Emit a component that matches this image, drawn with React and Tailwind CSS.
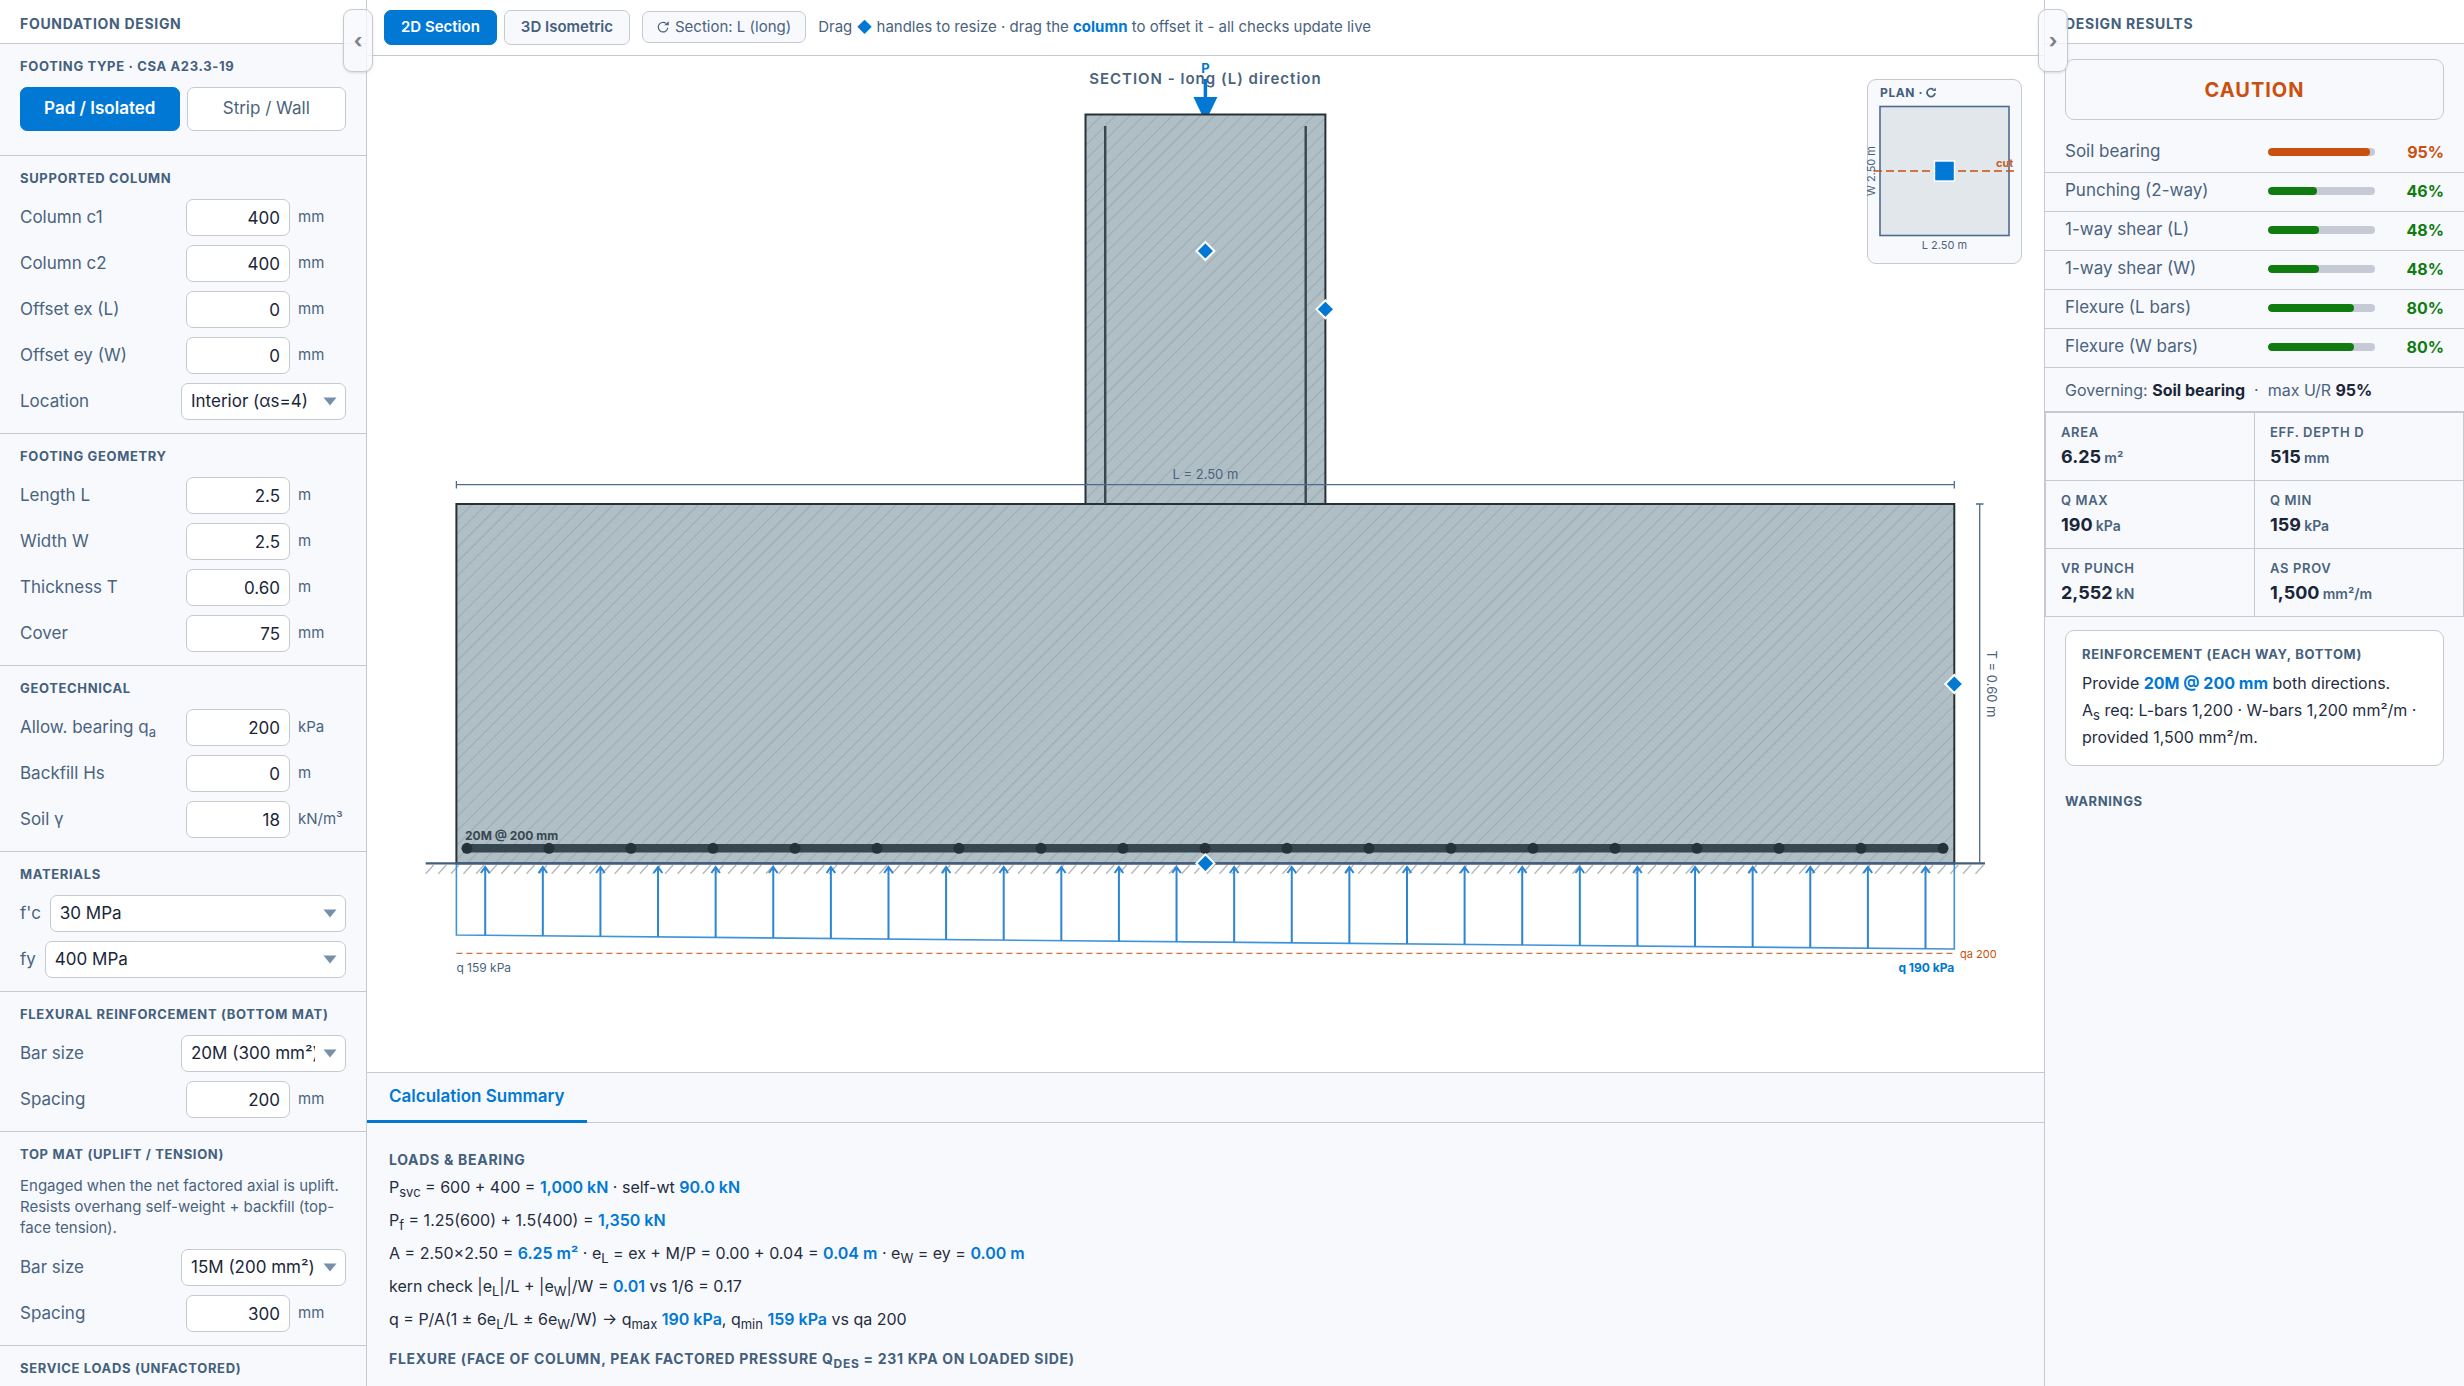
import { useState } from "react";

const checks = [
  { name: "Soil bearing", value: 95 },
  { name: "Punching (2-way)", value: 46 },
  { name: "1-way shear (L)", value: 48 },
  { name: "1-way shear (W)", value: 48 },
  { name: "Flexure (L bars)", value: 80 },
  { name: "Flexure (W bars)", value: 80 },
];

const stats = [
  { label: "AREA", value: "6.25", unit: "m²" },
  { label: "EFF. DEPTH D", value: "515", unit: "mm" },
  { label: "Q MAX", value: "190", unit: "kPa" },
  { label: "Q MIN", value: "159", unit: "kPa" },
  { label: "VR PUNCH", value: "2,552", unit: "kN" },
  { label: "AS PROV", value: "1,500", unit: "mm²/m" },
];

function Section({ title, children }) {
  return (
    <section className="border-b border-[#c6c9cf] px-5 py-[13px]">
      <h3 className="mb-3 text-[13px] leading-[18px] font-bold tracking-wider text-[#43607c]">
        {title}
      </h3>
      <div className="flex flex-col gap-[9px]">{children}</div>
    </section>
  );
}

function NumberRow({ id, label, value, unit }) {
  return (
    <div className="flex h-[37px] items-center">
      <label htmlFor={id} className="flex-1 text-[17px]">
        {label}
      </label>
      <input
        id={id}
        type="text"
        inputMode="decimal"
        defaultValue={value}
        className="h-full w-[104px] rounded-[7px] border border-[#c6c9cf] bg-white px-[9px] text-right text-[17px] text-[#1a2638]"
      />
      <span className="ml-2 w-12 text-[15px] whitespace-nowrap">{unit}</span>
    </div>
  );
}

function SelectRow({ id, label, options, wide }) {
  return (
    <div className="flex h-[37px] items-center gap-[9px]">
      <label htmlFor={id} className={wide ? "text-[17px]" : "flex-1 text-[17px]"}>
        {label}
      </label>
      <div className={wide ? "relative h-full flex-1" : "relative h-full w-[165px]"}>
        <select
          id={id}
          className="h-full w-full appearance-none rounded-[7px] border border-[#c6c9cf] bg-white pr-[30px] pl-[9px] text-[17px] text-[#1a2638]"
        >
          {options.map((o) => (
            <option key={o}>{o}</option>
          ))}
        </select>
        <svg
          viewBox="0 0 14 9"
          className="pointer-events-none absolute top-[14px] right-[9px] h-[9px] w-[14px]"
        >
          <path d="M0.5 0.5H13.5L7 8.5Z" fill="#7590ab" />
        </svg>
      </div>
    </div>
  );
}

function Sub({ children }) {
  return <sub className="-bottom-1 text-[13px]">{children}</sub>;
}

function Val({ children }) {
  return <b className="font-semibold text-[#0078d4]">{children}</b>;
}

// Clockwise circle arrow, 10 x 10 units
function RotateShape() {
  return (
    <>
      <path d="M9 5.6A4 4 0 1 1 7.4 1.9" fill="none" stroke="currentColor" />
      <path d="M6 3.6H9.8V0.2Z" fill="currentColor" />
    </>
  );
}

function Sidebar() {
  const [type, setType] = useState("pad");
  const on = "bg-[#0078d4] font-semibold text-white border-[#0078d4]";
  const off = "bg-white border-[#c6c9cf]";

  return (
    <aside className="w-[367px] shrink-0 overflow-hidden border-r border-[#c6c9cf] bg-[#f8f9fd] text-[#4a637d]">
      <h2 className="flex h-11 items-center border-b border-[#c6c9cf] bg-white px-5 pt-1 text-sm font-bold tracking-wider text-[#43607c]">
        FOUNDATION DESIGN
      </h2>
      <Section title="FOOTING TYPE · CSA A23.3-19">
        <div className="mb-[11px] flex gap-[7px]">
          <button
            onClick={() => setType("pad")}
            className={`h-11 flex-1 rounded-[7px] border text-[17px] ${type === "pad" ? on : off}`}
          >
            Pad / Isolated
          </button>
          <button
            onClick={() => setType("strip")}
            className={`h-11 flex-1 rounded-[7px] border text-[17px] ${type === "strip" ? on : off}`}
          >
            Strip / Wall
          </button>
        </div>
      </Section>
      <Section title="SUPPORTED COLUMN">
        <NumberRow id="c1" label="Column c1" value="400" unit="mm" />
        <NumberRow id="c2" label="Column c2" value="400" unit="mm" />
        <NumberRow id="ex" label="Offset ex (L)" value="0" unit="mm" />
        <NumberRow id="ey" label="Offset ey (W)" value="0" unit="mm" />
        <SelectRow
          id="location"
          label="Location"
          options={["Interior (αs=4)", "Edge (αs=3)", "Corner (αs=2)"]}
        />
      </Section>
      <Section title="FOOTING GEOMETRY">
        <NumberRow id="length" label="Length L" value="2.5" unit="m" />
        <NumberRow id="width" label="Width W" value="2.5" unit="m" />
        <NumberRow id="thickness" label="Thickness T" value="0.60" unit="m" />
        <NumberRow id="cover" label="Cover" value="75" unit="mm" />
      </Section>
      <Section title="GEOTECHNICAL">
        <NumberRow
          id="qa"
          label={
            <>
              Allow. bearing q<Sub>a</Sub>
            </>
          }
          value="200"
          unit="kPa"
        />
        <NumberRow id="hs" label="Backfill Hs" value="0" unit="m" />
        <NumberRow id="gamma" label="Soil γ" value="18" unit="kN/m³" />
      </Section>
      <Section title="MATERIALS">
        <SelectRow id="fc" label="f'c" options={["30 MPa", "35 MPa", "40 MPa"]} wide />
        <SelectRow id="fy" label="fy" options={["400 MPa", "500 MPa"]} wide />
      </Section>
      <Section title="FLEXURAL REINFORCEMENT (BOTTOM MAT)">
        <SelectRow id="bar" label="Bar size" options={["20M (300 mm²)", "25M (500 mm²)"]} />
        <NumberRow id="spacing" label="Spacing" value="200" unit="mm" />
      </Section>
      <Section title="TOP MAT (UPLIFT / TENSION)">
        <p className="mb-[2px] text-[15px] leading-[21px]">
          Engaged when the net factored axial is uplift. Resists overhang
          self-weight + backfill (top-face tension).
        </p>
        <SelectRow id="topbar" label="Bar size" options={["15M (200 mm²)", "20M (300 mm²)"]} />
        <NumberRow id="topspacing" label="Spacing" value="300" unit="mm" />
      </Section>
      <Section title="SERVICE LOADS (UNFACTORED)" />
    </aside>
  );
}

function Handle({ x, y }) {
  return (
    <path
      d={`M${x} ${y - 9}L${x + 9} ${y}L${x} ${y + 9}L${x - 9} ${y}Z`}
      fill="#0078d4"
      stroke="#fff"
      strokeWidth="2"
    />
  );
}

// Footing elevation, drawn at 600 units per metre
const LEFT = 89.4;
const RIGHT = 1587.3;
const TOP = 448;
const BASE = 807.4;
const MID = 838.4;

function SectionDrawing() {
  const step = (RIGHT - LEFT) / 26;
  const arrows = Array.from({ length: 26 }, (_, i) => LEFT + step * (i + 0.5));
  const dots = Array.from({ length: 19 }, (_, i) => 100 + i * 82);
  const ticks = Array.from({ length: 124 }, (_, i) => 58.7 + i * 12.6);
  const pressure = (x) => 879 + ((x - LEFT) / (RIGHT - LEFT)) * 14;

  return (
    <svg viewBox="0 0 1677 1016" className="block h-full w-full">
      <defs>
        <pattern
          id="hatch"
          width="10"
          height="10"
          patternUnits="userSpaceOnUse"
          patternTransform="rotate(45)"
        >
          <rect width="10" height="10" fill="#b0bec5" />
          <line x1="1.5" y1="0" x2="1.5" y2="10" stroke="#9aa9b1" strokeWidth="0.9" />
        </pattern>
      </defs>

      {/* ground line */}
      {ticks.map((x) => (
        <line key={x} x1={x} y1="817.7" x2={x + 8} y2="809" stroke="#b2b5bc" strokeWidth="1.3" />
      ))}

      {/* soil pressure */}
      <path
        d={`M${LEFT} ${BASE}V879L${RIGHT} 893V${BASE}`}
        fill="none"
        stroke="#3f93d8"
        strokeWidth="1.6"
      />
      {arrows.map((x) => (
        <path
          key={x}
          d={`M${x} ${pressure(x)}V811M${x - 4.3} 817L${x} 811L${x + 4.3} 817`}
          fill="none"
          stroke="#2b86d3"
          strokeWidth="2"
        />
      ))}
      <line x1={LEFT} y1="897.3" x2={RIGHT} y2="897.3" stroke="#d0713f" strokeWidth="1.3" strokeDasharray="6 4" />
      <text x={LEFT} y="916" fontSize="12" fill="#4a637d">q 159 kPa</text>
      <text x={RIGHT} y="916" fontSize="12" fontWeight="700" fill="#0078d4" textAnchor="end">q 190 kPa</text>
      <text x="1593" y="902" fontSize="11" fill="#ca5010">qa 200</text>

      {/* axial load */}
      <text x={MID} y="28" fontSize="15" fontWeight="600" letterSpacing="1" fill="#4a637d" textAnchor="middle">
        SECTION - long (L) direction
      </text>
      <text x={MID} y="17" fontSize="13" fontWeight="700" fill="#0078d4" textAnchor="middle">P</text>
      <line x1={MID} y1="23" x2={MID} y2="43" stroke="#0078d4" strokeWidth="3.5" />
      <path d={`M${MID - 12} 41H${MID + 12}L${MID} 66Z`} fill="#0078d4" />

      {/* concrete */}
      <rect x="718.5" y="58.5" width="239.9" height="389.5" fill="url(#hatch)" stroke="#263238" strokeWidth="2" />
      <rect x={LEFT} y={TOP} width={RIGHT - LEFT} height={BASE - TOP} fill="url(#hatch)" stroke="#263238" strokeWidth="2" />
      <line x1="58.7" y1={BASE} x2="1618" y2={BASE} stroke="#435d80" strokeWidth="2.4" />

      {/* rebar */}
      <path d={`M738.2 70V${TOP}M938.7 70V${TOP}`} stroke="#37474f" strokeWidth="2.4" />
      <line x1="100" y1="792.3" x2="1576.3" y2="792.3" stroke="#37474f" strokeWidth="8.5" strokeLinecap="round" />
      {dots.map((x) => (
        <circle key={x} cx={x} cy="792.3" r="5.5" fill="#263238" />
      ))}
      <text x="98" y="784" fontSize="12" fontWeight="700" fill="#37474f">20M @ 200 mm</text>

      {/* dimensions */}
      <path
        d={`M${LEFT} 428.7H${RIGHT}M${LEFT} 425V432.5M${RIGHT} 425V432.5M1612.7 ${TOP}V${BASE}M1609 ${TOP}H1616.5`}
        stroke="#4f6b8a"
        strokeWidth="1.3"
      />
      <text x={MID} y="423" fontSize="13" fill="#4a637d" textAnchor="middle">L = 2.50 m</text>
      <text x="0" y="0" fontSize="13" fill="#4a637d" textAnchor="middle" transform="translate(1620 628) rotate(90)">
        T = 0.60 m
      </text>

      <Handle x={MID} y={195} />
      <Handle x={958.4} y={253.3} />
      <Handle x={RIGHT} y={628} />
      <Handle x={MID} y={BASE} />
    </svg>
  );
}

function PlanInset() {
  return (
    <button
      title="Switch section direction"
      className="absolute top-[23px] right-[22px] w-[155px] rounded-[9px] border border-[#c6c9cf] bg-[#f8f9fd]"
    >
      <svg viewBox="0 0 153 183" className="block w-full overflow-visible text-[#43607c]">
        <text x="12" y="17" fontSize="12" fontWeight="700" letterSpacing="0.6" fill="currentColor">PLAN ·</text>
        <g transform="translate(58 7.5)" strokeWidth="1.7">
          <RotateShape />
        </g>
        <rect x="12" y="26.5" width="129" height="129" fill="#e1e7ea" stroke="#4f6b8f" strokeWidth="1.6" />
        <line x1="6" y1="91" x2="146" y2="91" stroke="#ca5010" strokeWidth="1.6" strokeDasharray="8 4" />
        <rect x="66.5" y="81" width="20" height="20" fill="#0078d4" stroke="#fff" strokeWidth="1.4" />
        <text x="128" y="87" fontSize="11" fontWeight="700" fill="#c4602c">cut</text>
        <text x="76.5" y="169" fontSize="11" fill="#4a637d" textAnchor="middle">L 2.50 m</text>
        <text x="0" y="0" fontSize="11" fill="#4a637d" textAnchor="middle" transform="translate(7 91) rotate(-90)">
          W 2.50 m
        </text>
      </svg>
    </button>
  );
}

function Toolbar() {
  const [view, setView] = useState("2d");
  const on = "border-[#0078d4] bg-[#0078d4] text-white";
  const off = "border-[#c6c9cf] bg-[#f8f9fd] text-[#43607c]";

  return (
    <div className="flex h-14 shrink-0 items-center border-b border-[#c6c9cf] bg-white px-[17px] pb-px text-[15px] text-[#4a637d]">
      <button
        onClick={() => setView("2d")}
        className={`h-[35px] rounded-[7px] border px-4 font-semibold ${view === "2d" ? on : off}`}
      >
        2D Section
      </button>
      <button
        onClick={() => setView("3d")}
        className={`ml-[7px] h-[35px] rounded-[7px] border px-4 font-semibold ${view === "3d" ? on : off}`}
      >
        3D Isometric
      </button>
      <button className="ml-3 flex h-8 items-center gap-[6px] rounded-[7px] border border-[#c6c9cf] bg-[#f8f9fd] px-[14px]">
        <svg viewBox="0 0 10 10" className="h-3 w-3 overflow-visible" strokeWidth="1">
          <RotateShape />
        </svg>
        Section: L (long)
      </button>
      <p className="ml-3">
        Drag <span className="text-[#0078d4]">◆</span> handles to resize · drag the{" "}
        <b className="text-[#0078d4]">column</b> to offset it - all checks update live
      </p>
    </div>
  );
}

function Summary() {
  return (
    <div className="h-[314px] shrink-0 overflow-hidden border-t border-[#c6c9cf] bg-[#f8f9fd]">
      <div className="flex h-[50px] border-b border-[#c6c9cf]">
        <button className="-mb-px h-[50px] border-b-3 border-[#0078d4] px-[22px] text-[17px] font-semibold text-[#0078d4]">
          Calculation Summary
        </button>
      </div>
      <div className="px-[22px] pt-7 text-base leading-[33px] text-[#1f2d40]">
        <h3 className="mb-[2px] text-sm leading-[18px] font-bold tracking-wider text-[#43607c]">
          LOADS &amp; BEARING
        </h3>
        <p>
          P<Sub>svc</Sub> = 600 + 400 = <Val>1,000 kN</Val> · self-wt <Val>90.0 kN</Val>
        </p>
        <p>
          P<Sub>f</Sub> = 1.25(600) + 1.5(400) = <Val>1,350 kN</Val>
        </p>
        <p>
          A = 2.50×2.50 = <Val>6.25 m²</Val> · e<Sub>L</Sub> = ex + M/P = 0.00 + 0.04 ={" "}
          <Val>0.04 m</Val> · e<Sub>W</Sub> = ey = <Val>0.00 m</Val>
        </p>
        <p>
          kern check |e<Sub>L</Sub>|/L + |e<Sub>W</Sub>|/W = <Val>0.01</Val> vs 1/6 = 0.17
        </p>
        <p>
          q = P/A(1 ± 6e<Sub>L</Sub>/L ± 6e<Sub>W</Sub>/W) → q<Sub>max</Sub> <Val>190 kPa</Val>, q
          <Sub>min</Sub> <Val>159 kPa</Val> vs qa 200
        </p>
        <h3 className="mt-[14px] text-sm leading-[18px] font-bold tracking-wider text-[#43607c]">
          FLEXURE (FACE OF COLUMN, PEAK FACTORED PRESSURE Q
          <sub className="-bottom-1 text-xs">DES</sub> = 231 KPA ON LOADED SIDE)
        </h3>
      </div>
    </div>
  );
}

function Results() {
  return (
    <aside className="w-[420px] shrink-0 overflow-hidden border-l border-[#c6c9cf] bg-[#f8f9fd] text-[#4a637d]">
      <h2 className="flex h-11 items-center border-b border-[#c6c9cf] bg-white px-5 pt-1 text-sm font-bold tracking-wider text-[#43607c]">
        DESIGN RESULTS
      </h2>
      <div className="mx-5 mt-[15px] mb-[14px] flex h-[61px] items-center justify-center rounded-[9px] border border-[#c6c9cf] text-xl font-bold tracking-[1px] text-[#ca5010]">
        CAUTION
      </div>
      <ul>
        {checks.map((c) => (
          <li
            key={c.name}
            className="flex h-[39px] items-center border-b border-[#c6c9cf] px-5 pb-[2px] text-[17px]"
          >
            <span className="flex-1">{c.name}</span>
            <span className="h-2 w-[107px] overflow-hidden rounded-full bg-[#c5cad5]">
              <span
                className={`block h-full rounded-full ${c.value > 90 ? "bg-[#ca5010]" : "bg-[#107c10]"}`}
                style={{ width: `${c.value}%` }}
              />
            </span>
            <span
              className={`w-[69px] text-right text-base font-bold ${c.value > 90 ? "text-[#ca5010]" : "text-[#107c10]"}`}
            >
              {c.value}%
            </span>
          </li>
        ))}
      </ul>
      <p className="flex h-11 items-center border-b border-[#c6c9cf] px-5 text-base whitespace-pre">
        Governing: <b className="text-[#1a2638]">Soil bearing</b>
        {"  ·  "}max U/R <b className="text-[#1a2638]">95%</b>
      </p>
      <dl className="grid grid-cols-2 gap-px border border-[#c6c9cf] bg-[#c6c9cf]">
        {stats.map((s) => (
          <div key={s.label} className="h-[67px] bg-[#f8f9fd] px-[15px] pt-[10px]">
            <dt className="text-[13px] leading-[18px] font-semibold tracking-wider">{s.label}</dt>
            <dd className="mt-1 text-lg leading-6 font-bold text-[#1a2638]">
              {s.value} <span className="-ml-px text-sm font-semibold text-[#4a637d]">{s.unit}</span>
            </dd>
          </div>
        ))}
      </dl>
      <div className="mx-5 mt-[13px] rounded-[9px] border border-[#c6c9cf] bg-white px-4 py-[14px]">
        <h3 className="mb-[7px] text-[13px] leading-[18px] font-bold tracking-wider text-[#43607c]">
          REINFORCEMENT (EACH WAY, BOTTOM)
        </h3>
        <p className="text-base leading-[27px] text-[#1f2d40]">
          Provide <b className="text-[#0078d4]">20M @ 200 mm</b> both directions.
          <br />A<Sub>s</Sub> req: L-bars 1,200 · W-bars 1,200 mm²/m · provided 1,500 mm²/m.
        </p>
      </div>
      <h3 className="mx-5 mt-[26px] text-[13px] leading-[18px] font-bold tracking-wider text-[#43607c]">
        WARNINGS
      </h3>
    </aside>
  );
}

const tab =
  "absolute top-[9px] z-10 flex h-[63px] w-[30px] items-center justify-center rounded-[9px] border border-[#c6c9cf] bg-[#f8f9fd]/80 text-xl font-bold text-[#7b8189] shadow-sm";

export default function App() {
  return (
    <div className="flex h-screen overflow-hidden bg-white font-['Inter','Noto_Sans',sans-serif]">
      <Sidebar />
      <main className="relative flex min-w-0 flex-1 flex-col">
        <button aria-label="Collapse inputs" className={`${tab} -left-6`}>
          ‹
        </button>
        <Toolbar />
        <div className="relative min-h-0 flex-1">
          <SectionDrawing />
          <PlanInset />
        </div>
        <Summary />
        <button aria-label="Collapse results" className={`${tab} -right-6`}>
          ›
        </button>
      </main>
      <Results />
    </div>
  );
}
